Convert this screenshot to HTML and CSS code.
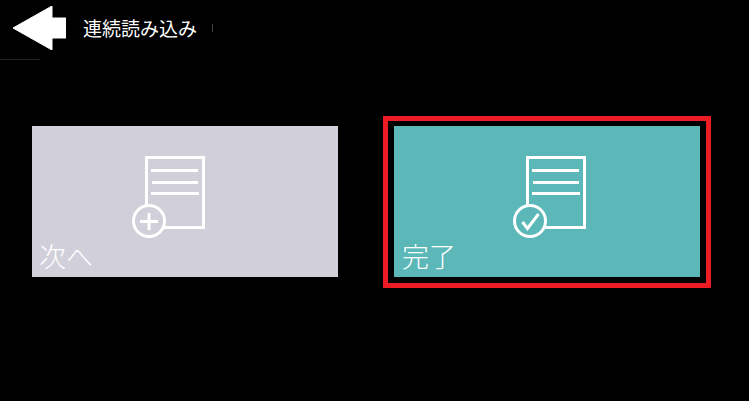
FILE: index.html
```html
<!DOCTYPE html>
<html lang="ja">
<head>
    <meta charset="UTF-8">
    <meta name="viewport" content="width=device-width, initial-scale=1.0">
    <title>連続読み込み</title>
    <link rel="stylesheet" href="styles.css">
</head>
<body>
    <div class="header">
        <svg class="back" viewBox="0 0 53 44" width="53" height="44">
            <polygon points="0,22 39,0 39,12 53,12 53,32 39,32 39,44" fill="#fff" stroke="#fff" stroke-width="1" stroke-linejoin="round"/>
        </svg>
        <div class="title">連続読み込み</div>
        <div class="tick"></div>
    </div>
    <div class="rule"></div>

    <div class="tiles">
        <!-- Next -->
        <div class="tile">
            <div class="card card-next">
                <svg class="icon" viewBox="0 0 80 88" width="80" height="88">
                    <rect x="16.5" y="5.5" width="57" height="70" fill="none" stroke="#fff" stroke-width="3"/>
                    <path d="M21 18.5H68M22 30.5H68M21 41.5H69" stroke="#fff" stroke-width="3" fill="none"/>
                    <circle cx="19" cy="69" r="15.5" fill="#d1cfd9" stroke="#fff" stroke-width="3"/>
                    <path d="M10 69.5H28M19 61V78" stroke="#fff" stroke-width="3" fill="none"/>
                </svg>
                <div class="label">次へ</div>
            </div>
        </div>

        <!-- Done -->
        <div class="tile selected">
            <div class="card card-done">
                <svg class="icon" viewBox="0 0 80 88" width="80" height="88">
                    <rect x="16.5" y="5.5" width="57" height="70" fill="none" stroke="#fff" stroke-width="3"/>
                    <path d="M21 18.5H68M22 30.5H68M21 41.5H69" stroke="#fff" stroke-width="3" fill="none"/>
                    <circle cx="19" cy="69" r="15.5" fill="#5bb7b8" stroke="#fff" stroke-width="3"/>
                    <path d="M11.5 70L16.5 76.5L27.5 62" stroke="#fff" stroke-width="3" fill="none"/>
                </svg>
                <div class="label">完了</div>
            </div>
        </div>
    </div>
</body>
</html>
```

FILE: styles.css
```css
body {
    margin: 0;
    background-color: #000;
    color: #fff;
    font-family: "Noto Sans CJK JP", "Noto Sans", sans-serif;
    overflow: hidden;
}

.header {
    display: flex;
    align-items: center;
    height: 59px;
    padding-left: 13px;
    box-sizing: border-box;
    padding-bottom: 3px;
}

.back {
    flex: none;
}

.title {
    margin-left: 17px;
    font-size: 19px;
    line-height: 24px;
}

.tick {
    width: 1px;
    height: 8px;
    margin-left: 15px;
    background-color: #444;
}

.rule {
    width: 40px;
    height: 1px;
    background-color: #222;
}

.tiles {
    display: flex;
    gap: 34px;
    padding: 56px 0 0 21px;
}

.tile {
    padding: 5px 6px 6px;
    border: 5px solid transparent;
}

.tile.selected {
    border-color: #ed1c24;
}

.card {
    width: 306px;
    height: 151px;
    padding-top: 26px;
    box-sizing: border-box;
}

.card-next {
    background-color: #d1cfd9;
}

.card-done {
    background-color: #5bb7b8;
}

.icon {
    display: block;
}

.card-next .icon {
    margin-left: 98px;
}

.card-done .icon {
    margin-left: 117px;
}

.label {
    font-size: 27px;
    font-weight: 300;
    line-height: 32px;
    padding-left: 7px;
}

.card-done .label {
    padding-left: 8px;
}
```
